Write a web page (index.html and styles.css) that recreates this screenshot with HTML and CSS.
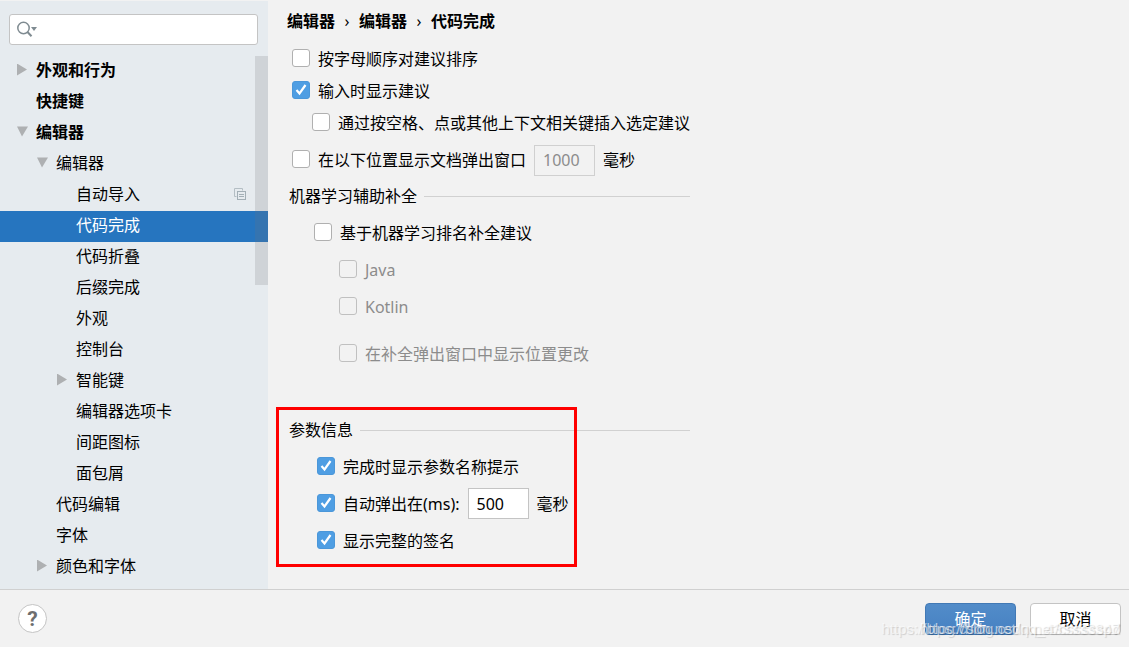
FILE: index.html
```html
<!DOCTYPE html>
<html lang="zh-CN">
<head>
    <meta charset="UTF-8">
    <meta name="viewport" content="width=device-width, initial-scale=1.0">
    <title>代码完成</title>
    <link rel="stylesheet" href="styles.css">
</head>
<body>
    <div class="dialog">
        <div class="content">
            <aside class="sidebar">
                <div class="search">
                    <svg class="search-icon" width="22" height="18" viewBox="0 0 22 18" aria-hidden="true">
                        <circle cx="6.500" cy="7" r="5.700" fill="none" stroke="#7f8b91" stroke-width="1.500"/>
                        <path d="M10.500 11l4 4.300" stroke="#7f8b91" stroke-width="2"/>
                        <path d="M14 6h6l-3 4z" fill="#7f8b91"/>
                    </svg>
                    <input type="text" class="search-input" aria-label="搜索">
                </div>
                <div class="tree-wrap">
                    <ul class="tree">
                        <li class="node level-1 closed bold">外观和行为</li>
                        <li class="node level-1 bold">快捷键</li>
                        <li class="node level-1 open bold">编辑器</li>
                        <li class="node level-2 open">编辑器</li>
                        <li class="node level-3">自动导入
                            <svg class="copy-icon" width="12" height="12" viewBox="0 0 12 12" aria-hidden="true">
                                <path d="M2.500 8.500h-2v-8h8v2" fill="none" stroke="#b4bec4"/>
                                <rect x="3.500" y="3.500" width="8" height="8" fill="#e6ebef" stroke="#a3afb6"/>
                                <path d="M5 6.500h5M5 8.500h5" stroke="#a3afb6"/>
                            </svg>
                        </li>
                        <li class="node level-3 selected">代码完成</li>
                        <li class="node level-3">代码折叠</li>
                        <li class="node level-3">后缀完成</li>
                        <li class="node level-3">外观</li>
                        <li class="node level-3">控制台</li>
                        <li class="node level-3 closed">智能键</li>
                        <li class="node level-3">编辑器选项卡</li>
                        <li class="node level-3">间距图标</li>
                        <li class="node level-3">面包屑</li>
                        <li class="node level-2">代码编辑</li>
                        <li class="node level-2">字体</li>
                        <li class="node level-2 closed">颜色和字体</li>
                    </ul>
                    <div class="scrollbar"></div>
                </div>
            </aside>

            <main class="settings">
                <div class="breadcrumb">
                    <span>编辑器</span><span class="sep">›</span><span>编辑器</span><span class="sep">›</span><span>代码完成</span>
                </div>

                <div class="general">
                    <label class="option"><input type="checkbox" class="check">按字母顺序对建议排序</label>
                    <label class="option"><input type="checkbox" class="check" checked>输入时显示建议</label>
                    <label class="option indent"><input type="checkbox" class="check">通过按空格、点或其他上下文相关键插入选定建议</label>
                    <div class="option-row">
                        <label class="option"><input type="checkbox" class="check">在以下位置显示文档弹出窗口</label>
                        <input type="text" class="number" value="1000" aria-label="文档弹出窗口延迟" disabled>
                        <span>毫秒</span>
                    </div>
                </div>

                <section class="group">
                    <h2 class="group-title">机器学习辅助补全</h2>
                    <div class="group-body">
                        <label class="option"><input type="checkbox" class="check">基于机器学习排名补全建议</label>
                        <div class="languages">
                            <label class="option disabled"><input type="checkbox" class="check" disabled>Java</label>
                            <label class="option disabled"><input type="checkbox" class="check" disabled>Kotlin</label>
                            <label class="option disabled spaced"><input type="checkbox" class="check" disabled>在补全弹出窗口中显示位置更改</label>
                        </div>
                    </div>
                </section>

                <section class="group params">
                    <h2 class="group-title">参数信息</h2>
                    <div class="group-body">
                        <label class="option"><input type="checkbox" class="check" checked>完成时显示参数名称提示</label>
                        <div class="option-row">
                            <label class="option"><input type="checkbox" class="check" checked>自动弹出在(ms):</label>
                            <input type="text" class="number" value="500" aria-label="自动弹出延迟">
                            <span>毫秒</span>
                        </div>
                        <label class="option"><input type="checkbox" class="check" checked>显示完整的签名</label>
                    </div>
                    <div class="highlight"></div>
                </section>
            </main>
        </div>

        <footer class="footer">
            <button type="button" class="help" aria-label="帮助">?</button>
            <div class="actions">
                <button type="button" class="btn primary">确定</button>
                <button type="button" class="btn">取消</button>
            </div>
            <div class="watermark">https://blog.csdn.net/qq_433333347</div>
            <div class="watermark">https://blog.csdn.net/cssssspd</div>
        </footer>
    </div>
</body>
</html>
```
FILE: styles.css
```css
* {
    box-sizing: border-box;
}
body {
    margin: 0;
    background-color: #f2f2f2;
    color: #000;
    font-family: "Noto Sans", "Noto Sans CJK SC", sans-serif;
    font-size: 16px;
    line-height: 24px;
}
button, input {
    font: inherit;
}
.dialog {
    display: flex;
    flex-direction: column;
    min-height: 100vh;
}
.content {
    display: flex;
    flex: 1;
    border-top: 1px solid #f2f2f2;
}

/* Sidebar */
.sidebar {
    flex: none;
    width: 268px;
    padding-top: 13px;
    background-color: #e6ebef;
}
.search {
    display: flex;
    align-items: center;
    height: 31px;
    margin: 0 10px 11px 9px;
    padding: 0 7px;
    background-color: #fff;
    border: 1px solid #c4c4c4;
    border-radius: 3px;
}
.search-icon {
    flex: none;
}
.search-input {
    flex: 1;
    min-width: 0;
    padding: 0 4px;
    border: none;
    outline: none;
    background: none;
}
.tree-wrap {
    position: relative;
}
.tree {
    margin: 0;
    padding: 0;
    list-style: none;
}
.node {
    display: flex;
    align-items: center;
    height: 31px;
    padding-right: 22px;
    padding-bottom: 4px;
}
.node::before {
    content: "";
    flex: none;
    width: 12px;
    height: 12px;
    margin-right: 8px;
}
.closed::before {
    background-color: #aeb0b2;
    clip-path: polygon(1px 0, 11px 6px, 1px 12px);
}
.open::before {
    background-color: #aeb0b2;
    clip-path: polygon(1px 1px, 12px 1px, 6px 11px);
}
.level-1 {
    padding-left: 16px;
}
.level-2 {
    padding-left: 36px;
}
.level-3 {
    padding-left: 56px;
}
.bold {
    font-weight: 700;
}
.selected {
    background-color: #2675bf;
    color: #fff;
}
.copy-icon {
    margin-left: auto;
}
.scrollbar {
    position: absolute;
    top: 0;
    right: 0;
    width: 13px;
    height: 229px;
    background-color: rgba(115, 115, 120, 0.2);
}

/* Settings panel */
.settings {
    flex: 1;
    padding: 8px 20px 0 19px;
}
.breadcrumb {
    display: flex;
    height: 34px;
    font-weight: 700;
}
.sep {
    width: 24px;
    text-align: center;
    font-weight: 400;
}
.general {
    padding-left: 5px;
}
.option {
    display: flex;
    align-items: center;
    gap: 8px;
    height: 32px;
}
.indent {
    margin-left: 20px;
}
.option-row {
    display: flex;
    align-items: center;
    gap: 8px;
    height: 42px;
}
.check {
    appearance: none;
    flex: none;
    width: 18px;
    height: 18px;
    margin: 0 0 2px;
    background-color: #fff;
    border: 1px solid #b0b0b0;
    border-radius: 3px;
}
.check:checked {
    background: #4f9ee3 url("data:image/svg+xml,%3Csvg xmlns='http://www.w3.org/2000/svg' viewBox='0 0 16 16'%3E%3Cpath d='M3.500 8l3 3.500 6-8.500' fill='none' stroke='white' stroke-width='2.200'/%3E%3C/svg%3E") center / 16px 16px no-repeat;
    border-color: #4b97d9;
}
.check:disabled {
    background-color: #f2f2f2;
    border-color: #c0c0c0;
}
.disabled {
    color: #8c8c8c;
}
.number {
    width: 61px;
    height: 31px;
    padding: 0 8px;
    background-color: #fff;
    border: 1px solid #c4c4c4;
    outline: none;
}
.number:disabled {
    background-color: #f2f2f2;
    border-color: #d0d0d0;
    color: #8c8c8c;
}
.group {
    position: relative;
    max-width: 403px;
    padding-left: 2px;
}
.group-title {
    display: flex;
    align-items: center;
    gap: 7px;
    height: 30px;
    margin: 0 0 3px;
    font-size: 16px;
    font-weight: 400;
}
.group-title::after {
    content: "";
    flex: 1;
    height: 1px;
    background-color: #d1d1d1;
}
.group-body {
    padding-left: 25px;
}
.group .option, .group .option-row {
    height: 37px;
}
.languages {
    padding-left: 25px;
}
.languages .spaced {
    margin-top: 10px;
}
.params {
    margin-top: 43px;
}
.params .group-body {
    padding-left: 28px;
}
.highlight {
    position: absolute;
    top: -8px;
    left: -11px;
    width: 301px;
    height: 160px;
    border: 3px solid #f00;
    pointer-events: none;
}

/* Footer */
.footer {
    position: relative;
    display: flex;
    align-items: center;
    justify-content: space-between;
    height: 58px;
    padding: 0 8px 0 18px;
    border-top: 1px solid #d0d0d0;
}
.help {
    width: 29px;
    height: 29px;
    padding: 0;
    background-color: #fff;
    border: 1px solid #c4c4c4;
    border-radius: 50%;
    color: #6e6e6e;
    font-family: Roboto, sans-serif;
    font-size: 21px;
    font-weight: 700;
}
.actions {
    display: flex;
    gap: 14px;
}
.btn {
    width: 91px;
    height: 32px;
    padding: 0;
    background-color: #fff;
    border: 1px solid #c4c4c4;
    border-radius: 4px;
}
.primary {
    background: linear-gradient(#528cc9, #4681c2);
    border-color: #4279b5;
    color: #fff;
}
.watermark {
    position: absolute;
    right: 9px;
    bottom: 6px;
    color: rgba(255, 255, 255, 0.6);
    font-family: "Liberation Sans", Arial, sans-serif;
    font-size: 15px;
    text-shadow: 1px 1px 1px rgba(0, 0, 0, 0.15);
    pointer-events: none;
}
```
